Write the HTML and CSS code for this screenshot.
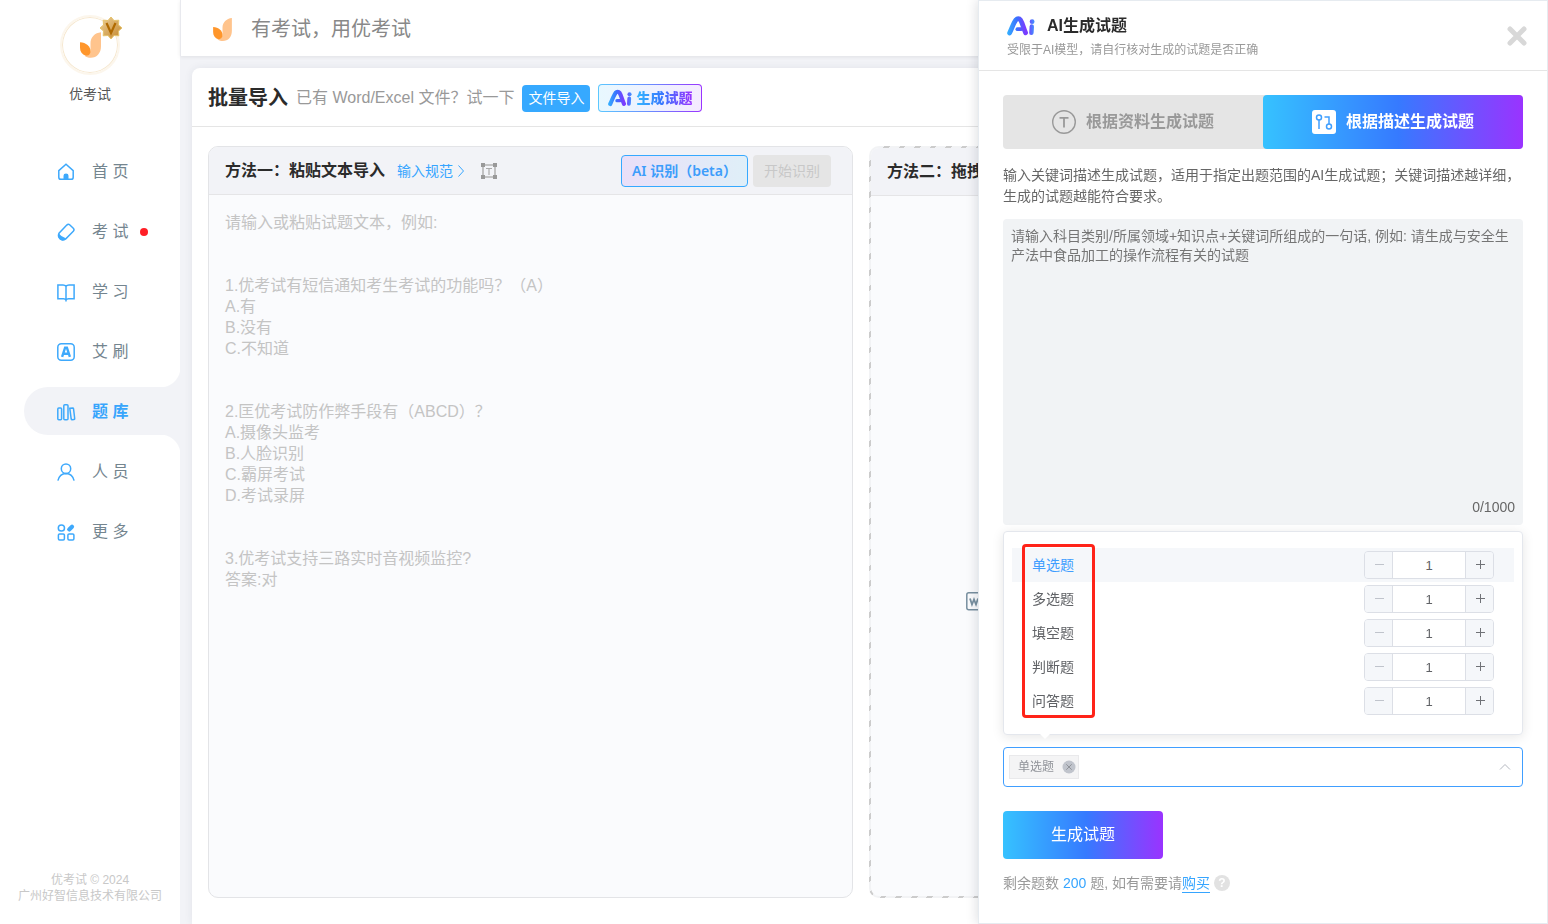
FILE: index.html
```html
<!DOCTYPE html>
<html lang="zh-CN">
<head>
<meta charset="utf-8">
<title>优考试 - 批量导入</title>
<link rel="stylesheet" href="styles.css">
</head>
<body>
<svg class="defs" aria-hidden="true">
  <defs>
    <linearGradient id="ai-grad" x1="0" y1="0" x2="28" y2="0" gradientUnits="userSpaceOnUse">
      <stop offset="0" stop-color="#33b4ff"/><stop offset=".35" stop-color="#3a70ff"/><stop offset=".68" stop-color="#8038ff"/><stop offset=".8" stop-color="#6a50ff"/><stop offset="1" stop-color="#3a9cff"/>
    </linearGradient>
    <linearGradient id="gold" x1="0" y1="0" x2="1" y2="1">
      <stop offset="0" stop-color="#ecd09a"/><stop offset="1" stop-color="#c4862a"/>
    </linearGradient>
    <symbol id="petals" viewBox="0 0 62 76">
      <path fill="#ffc48d" d="M62 0V42C62 62 50 76 32 76C24 76 18 74 14 70C26 70 31 62 31 50V32C31 14 44 2 62 0Z"/>
      <path fill="#ff962b" d="M0 30C18 31 31 42 31 56C31 66 25 70 17 70C6 66 0 58 0 46Z"/>
    </symbol>
    <symbol id="ai-logo" viewBox="0 0 28 20">
      <g fill="none" stroke="url(#ai-grad)" stroke-linecap="round" stroke-linejoin="round">
        <path stroke-width="4.800" d="M2.600 17C5 12 6.500 7 9 3.800C10.200 2.400 12.400 2.400 13.400 3.800C15.500 7 16.500 12 18.600 16.800"/>
        <path stroke-width="3.800" d="M10.400 13.200H14"/>
        <path stroke-width="4.400" d="M24.800 10.500L24.400 16.800"/>
        <path stroke-width="4.800" d="M25.100 5.600V5.700"/>
      </g>
    </symbol>
    <symbol id="minus" viewBox="0 0 12 12"><path d="M2 5.500H11" stroke="currentColor"/></symbol>
    <symbol id="plus" viewBox="0 0 12 12"><path d="M2 5.500H11M6.500 1V10" stroke="currentColor"/></symbol>
  </defs>
</svg>
<div class="app">
  <aside class="sidebar">
    <div class="profile">
      <div class="avatar">
        <svg class="avatar-logo"><use href="#petals"/></svg>
        <svg class="vip" viewBox="0 0 24 24"><path fill="url(#gold)" stroke="#e6c46c" stroke-width="1" d="M12 1L15 4.500L19.800 4.200L19.500 9L23 12L19.500 15L19.800 19.800L15 19.500L12 23L9 19.500L4.200 19.800L4.500 15L1 12L4.500 9L4.200 4.200L9 4.500Z"/><path fill="none" stroke="#b06a00" stroke-width="2.200" d="M7.500 7L12 17L16.500 7"/></svg>
      </div>
      <div class="profile-name">优考试</div>
    </div>
    <nav class="nav">
      <a class="nav-item" href="#"><svg class="nav-icon" viewBox="0 0 20 20"><path d="M2.800 8.600L10 2.200L17.200 8.600V15.200Q17.200 17.300 15.200 17.300H4.800Q2.800 17.300 2.800 15.200Z"/><path class="solid" d="M7.500 18V13.800Q7.500 11.500 10 11.500T12.500 13.800V18Z"/></svg>首 页</a>
      <a class="nav-item" href="#"><svg class="nav-icon" viewBox="0 0 20 20"><path d="M10.800 3.100Q12.300 1.600 13.900 3L17.300 6.300Q18.800 7.800 17.300 9.300L9.800 16.800Q6.500 19 4 16.800Q1.500 14.200 3 11.300Z"/><path class="solid" d="M2.500 11.300Q5 14.800 10.300 16.500Q6.500 19.800 3.700 17.300Q1.200 14.300 2.500 11.300Z"/></svg>考 试<span class="dot"></span></a>
      <a class="nav-item" href="#"><svg class="nav-icon" viewBox="0 0 20 20"><path d="M10 4.300Q9 3 7 3H1.900V16.800H7.500Q9.500 16.800 10 18.300Q10.500 16.800 12.500 16.800H18.100V3H13Q11 3 10 4.300V17.500"/></svg>学 习</a>
      <a class="nav-item" href="#"><svg class="nav-icon" viewBox="0 0 20 20"><rect x="1.800" y="1.800" width="16.400" height="16.400" rx="3.500"/><path stroke-width="2.400" d="M6.100 14.800L9.100 5.700H10.900L13.900 14.800M7.600 11.800H12.400"/></svg>艾 刷</a>
      <a class="nav-item active" href="#"><svg class="nav-icon" viewBox="0 0 20 20"><rect x="1.800" y="6" width="3.800" height="11.800" rx="1"/><rect x="7.800" y="2.800" width="4.200" height="15" rx="1"/><path d="M13.800 6.300L16.800 5.900Q17.400 5.900 17.500 6.500L18.700 16.500Q18.800 17.300 18 17.400L16 17.700Q15.400 17.700 15.200 17Z"/></svg>题 库</a>
      <a class="nav-item" href="#"><svg class="nav-icon" viewBox="0 0 20 20"><circle cx="10" cy="6.700" r="4.700"/><path d="M1.900 18.600Q3.500 11.800 10 11.500Q16.500 11.800 18.100 18.600"/></svg>人 员</a>
      <a class="nav-item" href="#"><svg class="nav-icon" viewBox="0 0 20 20"><circle cx="5.400" cy="6" r="3.100"/><rect x="2.400" y="11.900" width="6" height="6" rx="1.200"/><rect x="11.900" y="11.900" width="6" height="6" rx="1.200"/><path stroke-width="4.200" stroke-linejoin="round" stroke-linecap="round" d="M13.200 7.400L16 4.700"/></svg>更 多</a>
    </nav>
    <footer class="copyright">优考试 © 2024<br>广州好智信息技术有限公司</footer>
  </aside>

  <main class="main">
    <header class="topbar">
      <svg class="brand"><use href="#petals"/></svg>
      <span>有考试，用优考试</span>
    </header>
    <section class="card">
      <header class="card-head">
        <h1>批量导入</h1>
        <span class="card-sub">已有 Word/Excel 文件？试一下</span>
        <button class="btn-import" type="button">文件导入</button>
        <button class="btn-ai" type="button"><svg class="ai-small"><use href="#ai-logo"/></svg><span>生成试题</span></button>
      </header>
      <div class="methods">
        <section class="panel">
          <header class="panel-head">
            <h2>方法一：粘贴文本导入</h2>
            <a class="rules" href="#">输入规范<svg viewBox="0 0 8 14"><path d="M1.500 1.500L6.500 7L1.500 12.500"/></svg></a>
            <svg class="text-icon" viewBox="0 0 18 18"><path d="M3 3H15V15H3Z" fill="none" stroke="#b5b5b5" stroke-width="1.600"/><path d="M6 6.500H12M9 6.500V13" fill="none" stroke="#aaa" stroke-width="1.200"/><path fill="#999" d="M1 1H5V5H1ZM13 1H17V5H13ZM1 13H5V17H1ZM13 13H17V17H13Z"/></svg>
            <div class="panel-actions">
              <button class="btn-detect" type="button"><span>AI 识别（beta）</span></button>
              <button class="btn-start" type="button" disabled>开始识别</button>
            </div>
          </header>
          <textarea class="paste" aria-label="试题文本" placeholder="请输入或粘贴试题文本，例如:&#10;&#10;&#10;1.优考试有短信通知考生考试的功能吗？（A）&#10;A.有&#10;B.没有&#10;C.不知道&#10;&#10;&#10;2.匡优考试防作弊手段有（ABCD）？&#10;A.摄像头监考&#10;B.人脸识别&#10;C.霸屏考试&#10;D.考试录屏&#10;&#10;&#10;3.优考试支持三路实时音视频监控?&#10;答案:对"></textarea>
        </section>
        <section class="panel dashed">
          <header class="panel-head"><h2>方法二：拖拽</h2></header>
          <div class="dropzone">
            <svg class="file-icon" viewBox="0 0 20 20"><rect x="1.800" y="1.800" width="16.400" height="17" rx="2" fill="none" stroke="#7890a0" stroke-width="1.500"/><path d="M5 7.500L7 13.500L9 8.500L11 13.500L13 7.500" fill="none" stroke="#7890a0" stroke-width="1.800"/></svg>
          </div>
        </section>
      </div>
    </section>
  </main>
</div>

<aside class="drawer" role="dialog" aria-label="AI生成试题">
  <header class="drawer-head">
    <div class="drawer-intro">
      <div class="drawer-title"><svg class="ai-large"><use href="#ai-logo"/></svg><h2>AI生成试题</h2></div>
      <p>受限于AI模型，请自行核对生成的试题是否正确</p>
    </div>
    <button class="close" type="button" aria-label="关闭"><svg viewBox="0 0 20 20"><path d="M3 3L17 17M17 3L3 17"/></svg></button>
  </header>
  <div class="drawer-body">
    <div class="tabs">
      <button class="tab" type="button"><svg viewBox="0 0 24 24"><circle cx="12" cy="12" r="11.300" fill="none" stroke="#999" stroke-width="1.400"/><path d="M7.500 7.800H16.500M12 7.800V17.500" fill="none" stroke="#999" stroke-width="1.800"/></svg>根据资料生成试题</button>
      <button class="tab on" type="button"><svg viewBox="0 0 24 24"><rect width="24" height="24" rx="3" fill="#fff"/><g fill="none" stroke="#3f9fff" stroke-width="1.500"><circle cx="7" cy="7.500" r="2.500"/><path d="M7 10V19M12.500 7H17V14"/><circle cx="17" cy="16.500" r="2.500"/></g></svg>根据描述生成试题</button>
    </div>
    <p class="desc">输入关键词描述生成试题，适用于指定出题范围的AI生成试题；关键词描述越详细，生成的试题越能符合要求。</p>
    <div class="prompt">
      <textarea aria-label="描述" maxlength="1000" placeholder="请输入科目类别/所属领域+知识点+关键词所组成的一句话, 例如: 请生成与安全生产法中食品加工的操作流程有关的试题"></textarea>
      <div class="count">0/1000</div>
    </div>
    <div class="options">
      <div class="option picked"><label for="q1">单选题</label><div class="stepper"><button type="button" disabled aria-label="减少"><svg><use href="#minus"/></svg></button><input id="q1" value="1"><button type="button" aria-label="增加"><svg><use href="#plus"/></svg></button></div></div>
      <div class="option"><label for="q2">多选题</label><div class="stepper"><button type="button" disabled aria-label="减少"><svg><use href="#minus"/></svg></button><input id="q2" value="1"><button type="button" aria-label="增加"><svg><use href="#plus"/></svg></button></div></div>
      <div class="option"><label for="q3">填空题</label><div class="stepper"><button type="button" disabled aria-label="减少"><svg><use href="#minus"/></svg></button><input id="q3" value="1"><button type="button" aria-label="增加"><svg><use href="#plus"/></svg></button></div></div>
      <div class="option"><label for="q4">判断题</label><div class="stepper"><button type="button" disabled aria-label="减少"><svg><use href="#minus"/></svg></button><input id="q4" value="1"><button type="button" aria-label="增加"><svg><use href="#plus"/></svg></button></div></div>
      <div class="option"><label for="q5">问答题</label><div class="stepper"><button type="button" disabled aria-label="减少"><svg><use href="#minus"/></svg></button><input id="q5" value="1"><button type="button" aria-label="增加"><svg><use href="#plus"/></svg></button></div></div>
      <div class="highlight"></div>
    </div>
    <div class="type-select">
      <span class="tag">单选题<button type="button" aria-label="移除单选题"><svg viewBox="0 0 14 14"><circle cx="7" cy="7" r="6.500" fill="#c0c4cc"/><path d="M4.300 4.300L9.700 9.700M9.700 4.300L4.300 9.700" stroke="#909399"/></svg></button></span>
      <input type="text" role="combobox" aria-expanded="true" aria-label="题型" readonly>
      <svg class="caret" viewBox="0 0 12 8"><path d="M1 6.500L6 1.500L11 6.500"/></svg>
    </div>
    <button class="generate" type="button">生成试题</button>
    <div class="quota">剩余题数 <b>200</b> 题, 如有需要请<a href="#">购买</a><span class="help">?</span></div>
  </div>
</aside>
</body>
</html>
```
FILE: styles.css
```css
* { box-sizing: border-box; }
body, h1, h2, p { margin: 0; }
body, button, input, textarea {
  font-family: "Liberation Sans", "Noto Sans CJK SC", sans-serif;
}
body { color: #2b2b2b; font-size: 14px; line-height: 20px; background: #f2f3f7; overflow: hidden; }
button { padding: 0; border: 0; background: none; line-height: 20px; cursor: pointer; }
a { text-decoration: none; }
h1, h2 { font-weight: 700; }
.defs { position: absolute; width: 0; height: 0; }
.app { display: flex; height: 100vh; }

/* Sidebar */
.sidebar { display: flex; flex-direction: column; flex: none; width: 180px; background: #fff; }
.profile { display: flex; flex-direction: column; align-items: center; gap: 9px; padding-top: 15px; color: #555; }
.avatar { position: relative; display: flex; align-items: center; justify-content: center; width: 60px; height: 60px; border: 2px solid #fcf6ec; border-radius: 50%; box-shadow: inset 0 0 0 1px #f6e8d0; }
.avatar-logo { width: 21px; height: 26px; }
.vip { position: absolute; top: -1px; right: -5px; width: 24px; height: 24px; }
.nav { display: flex; flex-direction: column; gap: 12px; padding: 43px 0 0 24px; }
.nav-item { position: relative; display: flex; align-items: center; height: 48px; padding: 2px 0 0 32px; color: #74858f; font-size: 16px; white-space: pre; }
.nav-icon { width: 20px; height: 20px; margin-right: 16px; fill: none; stroke: #3ea9fc; stroke-width: 1.500; }
.nav-icon .solid { fill: #3ea9fc; stroke: none; }
.dot { width: 8px; height: 8px; margin-left: 12px; border-radius: 50%; background: #ff1f26; }
.active { color: #38a5fc; font-weight: 700; background: #f2f3f7; border-radius: 24px 0 0 24px; }
.active::before, .active::after { content: ""; position: absolute; right: 0; width: 20px; height: 20px; }
.active::before { bottom: 100%; background: radial-gradient(circle at 0 0, #fff 20px, #f2f3f7 21px); }
.active::after { top: 100%; background: radial-gradient(circle at 0 100%, #fff 20px, #f2f3f7 21px); }
.copyright { margin-top: auto; padding-bottom: 20px; color: #c8c8c8; font-size: 12px; line-height: 16px; text-align: center; }

/* Main area */
.main { display: flex; flex-direction: column; flex: 1; min-width: 0; }
.topbar { display: flex; align-items: center; flex: none; gap: 19px; height: 56px; padding: 2px 0 0 32px; background: #fff; border-left: 1px solid #e8e9ee; box-shadow: 0 1px 4px rgba(0, 0, 0, .08); color: #888; font-size: 20px; line-height: 28px; }
.brand { width: 19px; height: 23px; }
.card { display: flex; flex-direction: column; flex: 1; margin: 12px 18px 0 12px; background: #fff; border-radius: 8px 8px 0 0; box-shadow: 0 0 8px rgba(40, 50, 80, .08); }
.card-head { display: flex; align-items: center; gap: 8px; height: 59px; padding: 2px 16px 0; border-bottom: 1px solid #e5e5e5; }
.card-head h1 { font-size: 20px; line-height: 28px; }
.card-sub { color: #999; font-size: 16px; }
.btn-import { height: 27px; padding: 0 6px; border-radius: 4px; background: #36a9ff; color: #fff; font-size: 14px; }
.btn-ai { display: flex; align-items: center; gap: 4px; height: 28px; padding: 0 9px; border: 1px solid transparent; border-radius: 4px; background: linear-gradient(90deg, #e8f8ff, #f4ebff) padding-box, linear-gradient(90deg, #5cc8ff, #6a8cff 50%, #9a33ff) border-box; font-size: 14px; font-weight: 900; }
.btn-ai span { background: linear-gradient(90deg, #36b8ff, #367aff 45%, #9a33ff); background-clip: text; color: transparent; }
.ai-small { width: 24px; height: 18px; }
.methods { display: grid; grid-template-columns: 1fr 1fr; gap: 16px; flex: 1; padding: 19px 16px 26px; }
.panel { display: flex; flex-direction: column; overflow: hidden; border: 1px solid #e3e4e7; border-radius: 10px; background: #fafbfd; }
.panel-head { display: flex; align-items: center; flex: none; height: 48px; padding: 0 21px 0 16px; border-bottom: 1px solid #e5e5e7; background: #f2f3f7; }
.panel-head h2 { font-size: 16px; line-height: 24px; }
.rules { display: flex; align-items: center; gap: 4px; margin-left: 12px; color: #36a5ff; font-size: 14px; }
.rules svg { width: 8px; height: 14px; fill: none; stroke: #36a5ff; }
.text-icon { width: 18px; height: 18px; margin-left: 15px; }
.panel-actions { display: flex; gap: 5px; margin-left: auto; }
.btn-detect { height: 32px; padding: 0 10px; border: 1px solid #36a9ff; border-radius: 4px; background: linear-gradient(90deg, #eadff8, #dfeff8); font-family: "Noto Sans", "Noto Sans CJK SC", sans-serif; font-size: 14px; font-weight: 600; }
.btn-detect span { color: #3d9dfb; }
.btn-start { height: 32px; padding: 0 11px; border-radius: 4px; background: #e5e5e5; color: #c8c8c8; font-size: 14px; }
.paste { flex: 1; padding: 17px 16px; border: 0; outline: 0; resize: none; background: transparent; font-size: 16px; line-height: 21px; }
.paste::placeholder { color: #c4c4c4; }
.dashed { border: 2px solid transparent; background: linear-gradient(#fafbfd, #fafbfd) padding-box, repeating-linear-gradient(135deg, #ccc 0 4px, #f2f3f5 4px 11px) border-box; }
.dropzone { display: flex; flex: 1; align-items: center; padding: 0 0 0 94px; }
.file-icon { width: 20px; height: 20px; margin-bottom: -110px; }

/* Drawer */
.drawer { position: fixed; top: 0; right: 0; bottom: 0; width: 570px; border: 1px solid #e6ebf0; background: #fff; box-shadow: 0 0 12px rgba(0, 20, 40, .16); }
.drawer-head { display: flex; align-items: center; justify-content: space-between; height: 70px; padding: 0 20px 0 28px; border-bottom: 1px solid #e5e5e5; }
.drawer-intro { padding-top: 4px; }
.drawer-title { display: flex; align-items: center; gap: 12px; }
.drawer-title h2 { font-size: 16px; line-height: 24px; }
.ai-large { width: 28px; height: 20px; }
.drawer-head p { color: #999; font-size: 12px; line-height: 24px; }
.close { display: flex; }
.close svg { width: 20px; height: 20px; fill: none; stroke: #d8d8d8; stroke-width: 5; stroke-linecap: round; }
.drawer-body { display: flex; flex-direction: column; padding: 24px; }
.tabs { display: grid; grid-template-columns: 1fr 1fr; border-radius: 4px; background: #e5e5e5; }
.tab { display: flex; align-items: center; justify-content: center; gap: 10px; height: 54px; border-radius: 4px; color: #999; font-size: 16px; font-weight: 700; }
.tab svg { width: 24px; height: 24px; }
.on, .generate { background: linear-gradient(90deg, #36c2ff, #367aff 52%, #9a33ff); color: #fff; }
.desc { margin-top: 16px; color: #666; line-height: 21px; }
.prompt { display: flex; flex-direction: column; height: 306px; margin-top: 12px; padding: 8px; border-radius: 4px; background: #f1f3f5; }
.prompt textarea { flex: 1; padding: 0; border: 0; outline: 0; resize: none; background: transparent; font-size: 14px; line-height: 19px; }
.prompt textarea::placeholder { color: #757575; }
.count { color: #666; text-align: right; }
.options { position: relative; margin-top: 6px; padding: 16px 8px; border: 1px solid #e4e7ed; border-radius: 4px; background: #fff; box-shadow: 0 2px 12px rgba(0, 0, 0, .1); }
.options::after { content: ""; position: absolute; top: 100%; left: 36px; border: 5px solid transparent; border-top-color: #fff; border-bottom: 0; }
.option { display: flex; align-items: center; justify-content: space-between; height: 34px; padding: 0 20px; color: #606266; }
.picked { background: #f5f7fa; }
.picked label { color: #409eff; }
.stepper { display: flex; width: 130px; height: 28px; overflow: hidden; border: 1px solid #dcdfe6; border-radius: 4px; }
.stepper button { display: flex; align-items: center; justify-content: center; width: 27px; background: #f5f7fa; color: #707277; }
.stepper button:disabled { color: #c0c4cc; }
.stepper svg { width: 12px; height: 12px; }
.stepper input { flex: 1; min-width: 0; padding: 0; border: solid #dcdfe6; border-width: 0 1px; outline: 0; color: #606266; font-size: 13px; text-align: center; }
.highlight { position: absolute; top: 12px; left: 18px; width: 73px; height: 174px; border: 3px solid #ff2318; border-radius: 4px; pointer-events: none; }
.type-select { display: flex; align-items: center; height: 40px; margin-top: 12px; padding: 0 11px 0 5px; border: 1px solid #409eff; border-radius: 4px; }
.type-select input { flex: 1; min-width: 0; border: 0; outline: 0; }
.tag { display: flex; align-items: center; gap: 8px; height: 24px; padding: 0 2px 0 8px; border: 1px solid #e9e9eb; background: #f4f4f5; color: #909399; font-size: 12px; }
.tag button { display: flex; }
.tag svg { width: 14px; height: 14px; }
.caret { width: 12px; height: 8px; fill: none; stroke: #b4b8c0; }
.generate { width: 160px; height: 48px; margin-top: 24px; border-radius: 4px; font-size: 16px; }
.quota { display: flex; align-items: center; margin-top: 14px; color: #999; white-space: pre; }
.quota b { color: #36a5ff; font-weight: 400; }
.quota a { border-bottom: 1px solid #36a5ff; color: #36a5ff; line-height: 18px; }
.help { width: 16px; height: 16px; margin-left: 4px; border-radius: 50%; background: #e2e2e2; color: #fff; font-size: 12px; font-weight: 700; line-height: 16px; text-align: center; }
```
